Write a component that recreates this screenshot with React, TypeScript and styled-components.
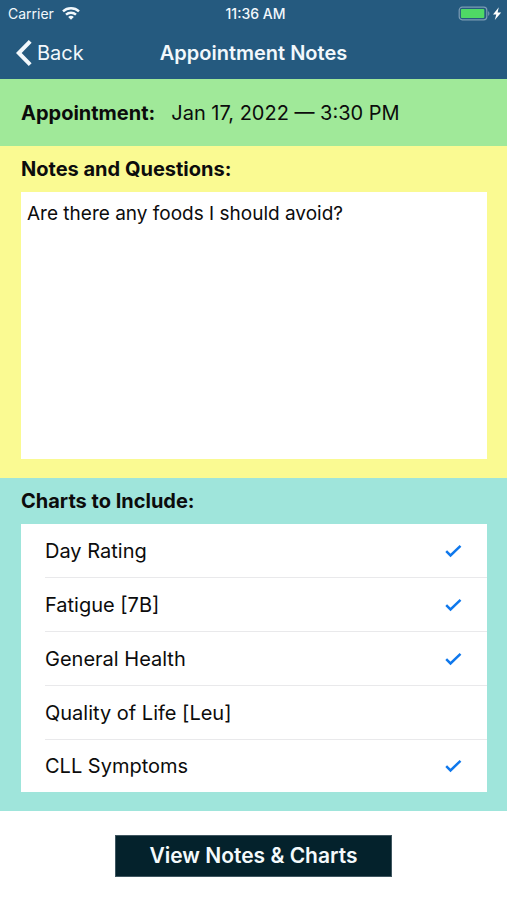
import React, { useState } from "react";
import styled, { createGlobalStyle } from "styled-components";

const GlobalStyle = createGlobalStyle`
  *, *::before, *::after { box-sizing: border-box; }
  body {
    margin: 0;
    background: #fff;
    color: #0c0c0c;
    font-family: Inter, "Liberation Sans", sans-serif;
  }
  button, input, textarea { font: inherit; color: inherit; }
`;

const Screen = styled.main`
  display: flex;
  flex-direction: column;
  min-height: 100vh;
`;

const Header = styled.header`
  background: #255a7f;
  color: #f2f8fc;
`;

const Bar = styled.div<{ $height: number }>`
  display: grid;
  grid-template-columns: 1fr auto 1fr;
  align-items: center;
  height: ${(p) => p.$height}px;
`;

const StatusBar = styled(Bar)`
  padding: 0 4px 0 8px;
  font-size: 14px;
  line-height: 20px;
`;

const Carrier = styled.span`
  display: flex;
  align-items: center;
  gap: 8px;
`;

const Clock = styled.time`
  font-weight: 500;
`;

const Power = styled.span`
  display: flex;
  justify-content: flex-end;
`;

const NavBar = styled(Bar)`
  padding: 0 16px;
`;

const BackButton = styled.button`
  display: flex;
  align-items: center;
  justify-self: start;
  gap: 5px;
  padding: 0;
  border: 0;
  background: none;
  font-size: 20px;
  line-height: 28px;
  cursor: pointer;
`;

const Title = styled.h1`
  margin: 0;
  font-size: 20px;
  line-height: 28px;
  font-weight: 600;
`;

const Section = styled.section<{ $color: string }>`
  padding: 9px 20px 19px 21px;
  background: ${(p) => p.$color};
`;

const AppointmentRow = styled(Section)`
  display: flex;
  align-items: center;
  gap: 16px;
  height: 67px;
  padding-top: 0;
  padding-bottom: 0;
`;

const Heading = styled.h2`
  margin: 0;
  font-size: 20px;
  line-height: 28px;
  font-weight: 700;
`;

const HeadingLabel = styled.label`
  display: block;
`;

const DateText = styled.span`
  font-size: 20px;
  line-height: 28px;
`;

const NotesField = styled.textarea`
  display: block;
  width: 100%;
  height: 267px;
  margin-top: 9px;
  padding: 8px 6px;
  border: 0;
  border-radius: 0;
  outline: 0;
  resize: none;
  background: #fff;
  font-size: 19px;
  line-height: 28px;
`;

const ChartList = styled.ul`
  margin: 9px 0 0;
  padding: 0 0 0 24px;
  list-style: none;
  background: #fff;
`;

const ChartItem = styled.li`
  height: 54px;
  border-bottom: 1px solid #e9e9eb;

  &:last-child {
    height: 52px;
    border-bottom: 0;
  }
`;

const ChartLabel = styled.label`
  display: flex;
  align-items: center;
  justify-content: space-between;
  height: 100%;
  padding-right: 25px;
  font-size: 20px;
  line-height: 28px;
  cursor: pointer;
`;

const CheckBox = styled.span`
  display: grid;
  width: 18px;
  height: 18px;

  > * { grid-area: 1 / 1; }
`;

const CheckInput = styled.input`
  appearance: none;
  width: 18px;
  height: 18px;
  margin: 0;

  & + svg { visibility: hidden; }
  &:checked + svg { visibility: visible; }
`;

const Footer = styled.footer`
  display: flex;
  justify-content: center;
  padding: 24px 20px;
`;

const ViewButton = styled.button`
  padding: 6px 33px;
  border: 1px solid #3f5660;
  background: #04222c;
  color: #f4fafc;
  font-size: 21px;
  line-height: 28px;
  font-weight: 600;
  cursor: pointer;
`;

const WifiIcon = () => (
  <svg width="18" height="13" viewBox="0 0 18 13" fill="none" stroke="currentColor" strokeWidth="2.4" aria-hidden="true">
    <path d="M1 4.4C5.4.2 12.6.2 17 4.4" />
    <path d="M4 7.7c2.8-2.6 7.2-2.6 10 0" />
    <path d="M6.2 9.9c1.6-1.4 4-1.4 5.6 0L9 12.8z" fill="currentColor" stroke="none" />
  </svg>
);

const BatteryIcon = () => (
  <svg width="45" height="16" viewBox="0 0 45 16" aria-hidden="true">
    <rect x="1.2" y="1.2" width="27.6" height="12.6" rx="3" fill="none" stroke="#7c9cb4" strokeWidth="1.2" />
    <rect x="2.9" y="2.9" width="23.4" height="9.2" rx="1" fill="#4fd965" />
    <path d="M30.2 5.2c1.6.6 1.6 4 0 4.6z" fill="#7c9cb4" />
    <path d="M40.8 1.2 35 8.6h3.3L36.8 14l6.4-7.6h-3.6z" fill="#fff" />
  </svg>
);

const ChevronIcon = () => (
  <svg width="16" height="26" viewBox="0 0 16 26" fill="none" stroke="currentColor" strokeWidth="4" aria-hidden="true">
    <path d="M14.2 1.4 2.8 13l11.4 11.6" />
  </svg>
);

const CheckIcon = () => (
  <svg width="18" height="18" viewBox="0 0 18 18" fill="none" stroke="#0f78ec" strokeWidth="2.5" aria-hidden="true">
    <path d="m2.2 9.2 4.3 4.2 10-9.6" />
  </svg>
);

const charts = [
  { name: "Day Rating", included: true },
  { name: "Fatigue [7B]", included: true },
  { name: "General Health", included: true },
  { name: "Quality of Life [Leu]", included: false },
  { name: "CLL Symptoms", included: true },
];

export default function App() {
  const [notes, setNotes] = useState("Are there any foods I should avoid?");

  return (
    <>
      <GlobalStyle />
      <Screen>
        <Header>
          <StatusBar $height={27}>
            <Carrier>Carrier <WifiIcon /></Carrier>
            <Clock>11:36 AM</Clock>
            <Power><BatteryIcon /></Power>
          </StatusBar>
          <NavBar $height={52}>
            <BackButton type="button"><ChevronIcon />Back</BackButton>
            <Title>Appointment Notes</Title>
          </NavBar>
        </Header>
        <AppointmentRow $color="#a0e999">
          <Heading>Appointment:</Heading>
          <DateText>Jan 17, 2022 — 3:30 PM</DateText>
        </AppointmentRow>
        <Section $color="#fafa92">
          <Heading><HeadingLabel htmlFor="notes">Notes and Questions:</HeadingLabel></Heading>
          <NotesField id="notes" spellCheck={false} value={notes} onChange={(e) => setNotes(e.target.value)} />
        </Section>
        <Section $color="#9fe5db">
          <Heading>Charts to Include:</Heading>
          <ChartList>
            {charts.map((chart) => (
              <ChartItem key={chart.name}>
                <ChartLabel>
                  {chart.name}
                  <CheckBox>
                    <CheckInput type="checkbox" defaultChecked={chart.included} />
                    <CheckIcon />
                  </CheckBox>
                </ChartLabel>
              </ChartItem>
            ))}
          </ChartList>
        </Section>
        <Footer>
          <ViewButton type="button">View Notes &amp; Charts</ViewButton>
        </Footer>
      </Screen>
    </>
  );
}
